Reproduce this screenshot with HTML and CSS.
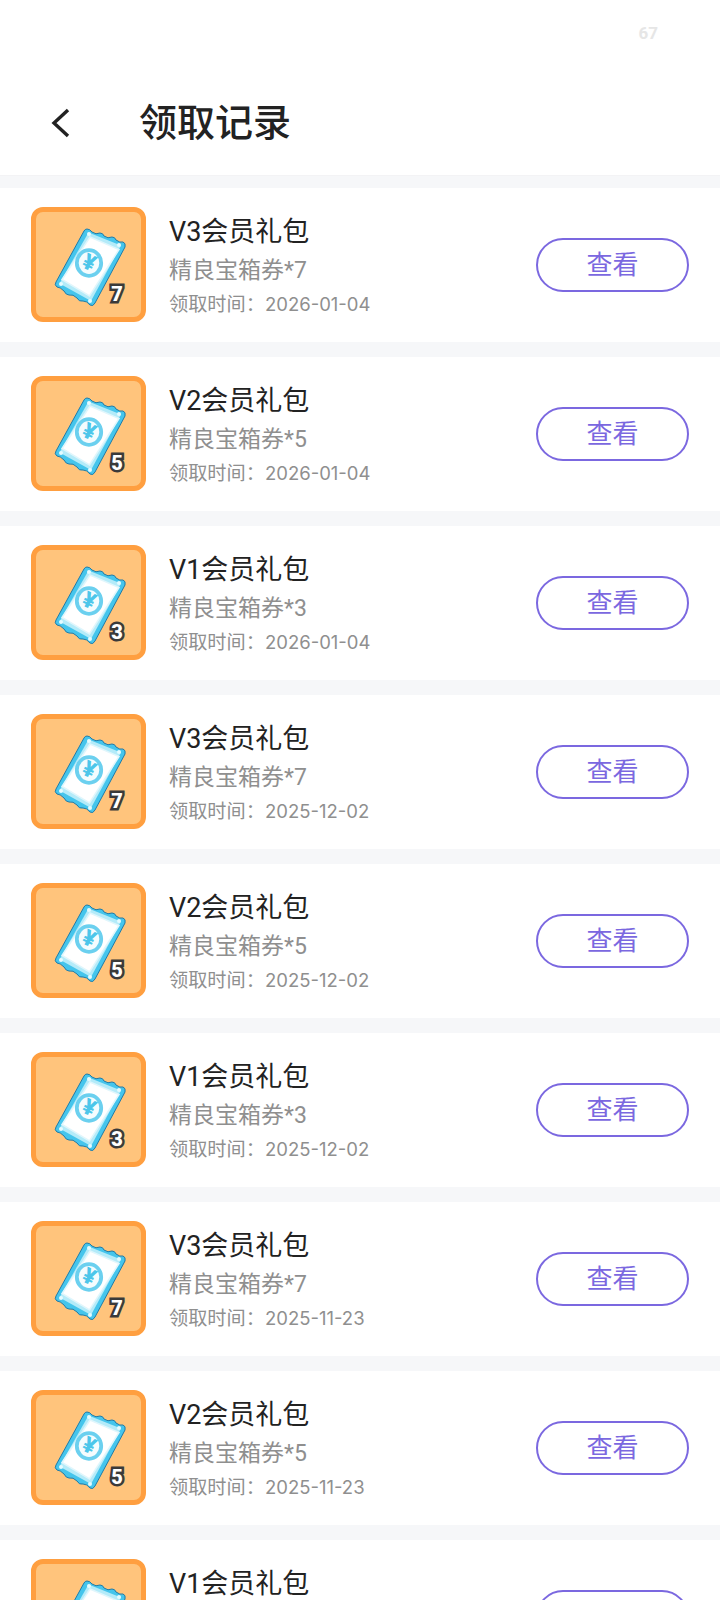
FILE: index.html
```html
<!DOCTYPE html>
<html lang="zh-CN">
<head>
<meta charset="utf-8">
<title>领取记录</title>
<link rel="stylesheet" href="styles.css">
</head>
<body>
<svg class="defs" width="0" height="0" aria-hidden="true">
  <symbol id="ticket" viewBox="0 0 115 115">
    <path d="M57 22 Q60 22 62 25 Q66 28 70 26 Q73 26 74 29 Q78 32 82 30 Q85 30 86 33 Q90 36 93 35 Q96 36 95 40 L65 96 Q63 100 60 98 Q57 94 53 94 Q49 95 47 91 Q43 87 39 88 Q36 88 34 84 Q30 80 27 80 Q24 78 26 75 L54 24 Q55 22 57 22 Z" fill="#45c5ec" stroke="#1f7ba8" stroke-width="1"/>
    <path d="M58.5 25.5 L91 38.5 L61 94 L29.5 76.5 Z" fill="#b4ebf9"/>
    <path d="M60 30 L89 42.5 L59.5 89 L32 72.5 Z" fill="#ffffff" stroke="#e0f6fc" stroke-width="1.5"/>
    <ellipse cx="59" cy="56" rx="12.2" ry="12.8" fill="#f4fcfe" stroke="#6bd0ef" stroke-width="3.8"/>
    <circle cx="59" cy="27" r="2" fill="#e6fbff"/>
    <circle cx="89" cy="38" r="2" fill="#e6fbff"/>
    <circle cx="60" cy="94" r="2" fill="#e6fbff"/>
    <circle cx="31" cy="77" r="2" fill="#e6fbff"/>
  </symbol>
</svg>
<header class="top">
  <div class="status"><span class="status-num">67</span></div>
  <div class="nav">
    <svg class="back" width="20" height="30" viewBox="0 0 20 30" aria-hidden="true"><path d="M18 2 L4 15 L18 28"/></svg>
    <h1 class="title">领取记录</h1>
  </div>
</header>
<main class="list">
  <section class="row">
    <div class="thumb"><svg class="ticket"><use href="#ticket"/></svg><span class="yen">¥</span><span class="count">7</span></div>
    <div class="info"><div class="name">V3会员礼包</div><div class="prize">精良宝箱券*7</div><div class="time">领取时间：<span class="date">2026-01-04</span></div></div>
    <button class="view">查看</button>
  </section>
  <section class="row">
    <div class="thumb"><svg class="ticket"><use href="#ticket"/></svg><span class="yen">¥</span><span class="count">5</span></div>
    <div class="info"><div class="name">V2会员礼包</div><div class="prize">精良宝箱券*5</div><div class="time">领取时间：<span class="date">2026-01-04</span></div></div>
    <button class="view">查看</button>
  </section>
  <section class="row">
    <div class="thumb"><svg class="ticket"><use href="#ticket"/></svg><span class="yen">¥</span><span class="count">3</span></div>
    <div class="info"><div class="name">V1会员礼包</div><div class="prize">精良宝箱券*3</div><div class="time">领取时间：<span class="date">2026-01-04</span></div></div>
    <button class="view">查看</button>
  </section>
  <section class="row">
    <div class="thumb"><svg class="ticket"><use href="#ticket"/></svg><span class="yen">¥</span><span class="count">7</span></div>
    <div class="info"><div class="name">V3会员礼包</div><div class="prize">精良宝箱券*7</div><div class="time">领取时间：<span class="date">2025-12-02</span></div></div>
    <button class="view">查看</button>
  </section>
  <section class="row">
    <div class="thumb"><svg class="ticket"><use href="#ticket"/></svg><span class="yen">¥</span><span class="count">5</span></div>
    <div class="info"><div class="name">V2会员礼包</div><div class="prize">精良宝箱券*5</div><div class="time">领取时间：<span class="date">2025-12-02</span></div></div>
    <button class="view">查看</button>
  </section>
  <section class="row">
    <div class="thumb"><svg class="ticket"><use href="#ticket"/></svg><span class="yen">¥</span><span class="count">3</span></div>
    <div class="info"><div class="name">V1会员礼包</div><div class="prize">精良宝箱券*3</div><div class="time">领取时间：<span class="date">2025-12-02</span></div></div>
    <button class="view">查看</button>
  </section>
  <section class="row">
    <div class="thumb"><svg class="ticket"><use href="#ticket"/></svg><span class="yen">¥</span><span class="count">7</span></div>
    <div class="info"><div class="name">V3会员礼包</div><div class="prize">精良宝箱券*7</div><div class="time">领取时间：<span class="date">2025-11-23</span></div></div>
    <button class="view">查看</button>
  </section>
  <section class="row">
    <div class="thumb"><svg class="ticket"><use href="#ticket"/></svg><span class="yen">¥</span><span class="count">5</span></div>
    <div class="info"><div class="name">V2会员礼包</div><div class="prize">精良宝箱券*5</div><div class="time">领取时间：<span class="date">2025-11-23</span></div></div>
    <button class="view">查看</button>
  </section>
  <section class="row">
    <div class="thumb"><svg class="ticket"><use href="#ticket"/></svg><span class="yen">¥</span><span class="count">3</span></div>
    <div class="info"><div class="name">V1会员礼包</div><div class="prize">精良宝箱券*3</div><div class="time">领取时间：<span class="date">2025-11-23</span></div></div>
    <button class="view">查看</button>
  </section>
</main>
</body>
</html>
```
FILE: styles.css
```css
* { box-sizing: border-box; }
html, body { margin: 0; padding: 0; height: 1600px; overflow: hidden; background: #f6f7f9; }
body { font-family: Roboto, "Noto Sans CJK SC", sans-serif; color: #222; }
.defs { position: absolute; }

.top { height: 176px; background: #fff; border-bottom: 1px solid #f3f3f5; }
.status { height: 66px; padding: 24px 62px 0 0; display: flex; justify-content: flex-end; }
.status-num { font-size: 17px; line-height: 18px; font-weight: 700; color: #e6e6e6; }
.nav { height: 109px; display: flex; align-items: center; padding: 4px 0 0 50px; }
.back { fill: none; stroke: #222; stroke-width: 3.4; margin-right: 69px; }
.title { margin: 0; font-size: 38px; line-height: 44px; font-weight: 500; color: #222; }

.list { display: flex; flex-direction: column; gap: 15px; padding-top: 12px; }
.row { height: 154px; flex: none; background: #fff; display: flex; align-items: center; padding: 0 31px; }

.thumb { position: relative; width: 115px; height: 115px; margin-bottom: 1px; flex: none; background: #ffc47c; border: 5px solid #ff9f40; border-radius: 12px; }
.ticket { position: absolute; left: -6px; top: -5px; width: 115px; height: 115px; }
.yen { position: absolute; left: 38px; top: 39px; width: 30px; text-align: center; font-family: Roboto, sans-serif; font-size: 22px; line-height: 24px; font-weight: 900; color: #4cc6ea; transform: rotate(25deg); }
.count { position: absolute; left: 71px; top: 71px; width: 20px; text-align: center; font-family: Roboto, sans-serif; font-size: 20px; line-height: 22px; font-weight: 900; color: #fff; -webkit-text-stroke: 5px #3a3a3a; paint-order: stroke fill; }

.info { flex: 1; min-width: 0; align-self: flex-start; padding: 26px 0 0 23px; }
.name { font-size: 27px; line-height: 37px; color: #222; }
.prize { font-size: 23px; line-height: 40px; color: #8f8f8f; }
.time { font-size: 19.2px; line-height: 26px; color: #8f8f8f; }
.date { font-family: Inter, sans-serif; font-size: 18.5px; }

.view { width: 153px; height: 54px; flex: none; margin-bottom: 1px; background: #fff; border: 2px solid #7b68e0; border-radius: 27px; font-family: Roboto, "Noto Sans CJK SC", sans-serif; font-size: 26px; color: #7b68e0; padding: 0 0 4px; }
```
